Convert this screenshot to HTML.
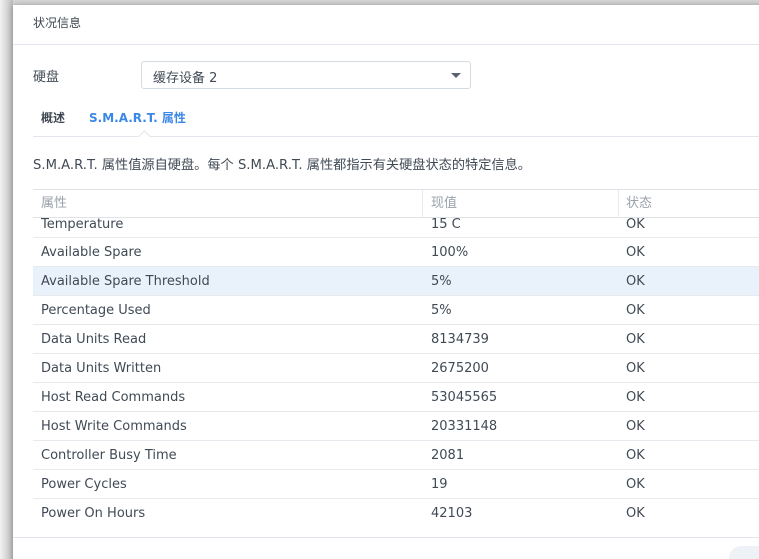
<!DOCTYPE html>
<html><head><meta charset="utf-8"><style>
*{margin:0;padding:0;box-sizing:border-box}
html,body{width:759px;height:559px;overflow:hidden}
body{background:#d8d8d8;font-family:"DejaVu Sans","Noto Sans CJK SC",sans-serif;font-size:13px;color:#404a55;position:relative}
.shade{position:absolute;left:0;top:0;width:13px;height:559px;background:linear-gradient(90deg,#f2f2f2,#bdbdbd)}
.dlg{position:absolute;left:13px;top:5px;width:760px;height:560px;background:#fff;box-shadow:0 0 6px rgba(0,0,0,.3);overflow:hidden}
.title{position:absolute;left:20px;top:9px;font-size:12px;color:#3d4550}
.hl{position:absolute;left:0;right:0;height:1px;background:#e2e6ec}
.lab{position:absolute;left:20px;top:61px}
.sel{position:absolute;left:128px;top:56px;width:330px;height:28px;border:1px solid #d5dbe3;border-radius:3px;padding:5px 0 0 11px}
.sel:after{content:"";position:absolute;right:9px;top:11px;border:5px solid transparent;border-top:5px solid #5a6470;border-bottom:0}
.tab{position:absolute;top:104px;font-size:12px;font-weight:bold}
.desc{position:absolute;left:20px;top:149px;font-size:13.2px}
.row{position:absolute;left:20px;width:740px;height:29px;line-height:30px;border-bottom:1px solid #e6e9ee}
.row span{position:absolute;top:0}
.a{left:8px}.b{left:398px}.c{left:593px}
.hi{background:#e9f1fb}
.hd{color:#9aa2ab;border-top:1px solid #dfe3e8;border-bottom:1px solid #dfe3e8;line-height:28px;z-index:2;background:#fff}
.sep{position:absolute;top:0;width:1px;height:28px;background:#e6e9ee}
</style></head><body>
<div class="shade"></div>
<div class="dlg">
<div class="title">状况信息</div>
<div class="hl" style="top:39px"></div>
<div class="lab">硬盘</div>
<div class="sel">缓存设备 2</div>
<div class="tab" style="left:28px;color:#3d4550">概述</div>
<div class="tab" style="left:76px;color:#3a87e6">S.M.A.R.T. 属性</div>
<div class="hl" style="top:131px;left:20px"></div>
<div style="position:absolute;left:127px;top:127px;width:9px;height:9px;background:#fff;border-left:1px solid #e2e6ec;border-top:1px solid #e2e6ec;transform:rotate(45deg)"></div>
<div class="desc">S.M.A.R.T. 属性值源自硬盘。每个 S.M.A.R.T. 属性都指示有关硬盘状态的特定信息。</div>
<div class="row hd" style="top:184px"><span class="a">属性</span><div class="sep" style="left:389px"></div><span class="b">现值</span><div class="sep" style="left:585px"></div><span class="c">状态</span></div>
<div class="row" style="top:213px;height:20px;line-height:14px;overflow:hidden"><span class="a">Temperature</span><span class="b">15 C</span><span class="c">OK</span></div>
<div class="row" style="top:233px"><span class="a">Available Spare</span><span class="b">100%</span><span class="c">OK</span></div>
<div class="row hi" style="top:262px"><span class="a">Available Spare Threshold</span><span class="b">5%</span><span class="c">OK</span></div>
<div class="row" style="top:291px"><span class="a">Percentage Used</span><span class="b">5%</span><span class="c">OK</span></div>
<div class="row" style="top:320px"><span class="a">Data Units Read</span><span class="b">8134739</span><span class="c">OK</span></div>
<div class="row" style="top:349px"><span class="a">Data Units Written</span><span class="b">2675200</span><span class="c">OK</span></div>
<div class="row" style="top:378px"><span class="a">Host Read Commands</span><span class="b">53045565</span><span class="c">OK</span></div>
<div class="row" style="top:407px"><span class="a">Host Write Commands</span><span class="b">20331148</span><span class="c">OK</span></div>
<div class="row" style="top:436px"><span class="a">Controller Busy Time</span><span class="b">2081</span><span class="c">OK</span></div>
<div class="row" style="top:465px"><span class="a">Power Cycles</span><span class="b">19</span><span class="c">OK</span></div>
<div class="row" style="top:494px;border:0"><span class="a">Power On Hours</span><span class="b">42103</span><span class="c">OK</span></div>
<div class="hl" style="top:532px"></div>
<div style="position:absolute;left:716px;top:541px;width:40px;height:24px;border-radius:12px;background:#eef1f5"></div>
</div>
</body></html>
